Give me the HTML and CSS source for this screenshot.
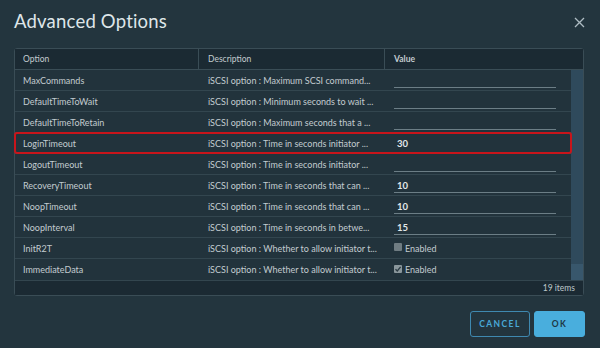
FILE: index.html
```html
<!DOCTYPE html>
<html>
<head>
<meta charset="utf-8">
<link rel="stylesheet" href="styles.css">
</head>
<body>
<div class="dialog">
  <div class="titlebar">
    <h1 class="title">Advanced Options</h1>
    <svg class="close" width="11" height="11" viewBox="0 0 11 11"><path d="M1 1L10 10M10 1L1 10" stroke="#aebcc3" stroke-width="1.3" fill="none"/></svg>
  </div>
  <div class="grid">
    <div class="head">
      <div class="hcell c1">Option</div>
      <div class="hcell c2">Description</div>
      <div class="hcell c3">Value</div>
    </div>
    <div class="body">
      <div class="rows">
        <div class="row"><div class="cell c1">MaxCommands</div><div class="cell c2">iSCSI option : Maximum SCSI command...</div><div class="cell c3"><span class="input"></span></div></div>
        <div class="row"><div class="cell c1">DefaultTimeToWait</div><div class="cell c2">iSCSI option : Minimum seconds to wait ...</div><div class="cell c3"><span class="input"></span></div></div>
        <div class="row"><div class="cell c1">DefaultTimeToRetain</div><div class="cell c2">iSCSI option : Maximum seconds that a ...</div><div class="cell c3"><span class="input"></span></div></div>
        <div class="row selected"><div class="cell c1">LoginTimeout</div><div class="cell c2">iSCSI option : Time in seconds initiator ...</div><div class="cell c3"><span class="input plain">30</span></div></div>
        <div class="row"><div class="cell c1">LogoutTimeout</div><div class="cell c2">iSCSI option : Time in seconds initiator ...</div><div class="cell c3"><span class="input"></span></div></div>
        <div class="row"><div class="cell c1">RecoveryTimeout</div><div class="cell c2">iSCSI option : Time in seconds that can ...</div><div class="cell c3"><span class="input">10</span></div></div>
        <div class="row"><div class="cell c1">NoopTimeout</div><div class="cell c2">iSCSI option : Time in seconds that can ...</div><div class="cell c3"><span class="input">10</span></div></div>
        <div class="row"><div class="cell c1">NoopInterval</div><div class="cell c2">iSCSI option : Time in seconds in betwe...</div><div class="cell c3"><span class="input">15</span></div></div>
        <div class="row"><div class="cell c1">InitR2T</div><div class="cell c2">iSCSI option : Whether to allow initiator t...</div><div class="cell c3"><span class="check"></span><span class="checklabel">Enabled</span></div></div>
        <div class="row last"><div class="cell c1">ImmediateData</div><div class="cell c2">iSCSI option : Whether to allow initiator t...</div><div class="cell c3"><span class="check on"><svg width="8" height="8" viewBox="0 0 8 8"><path d="M1.5 4.2L3.3 6L6.6 1.8" stroke="#2a3a42" stroke-width="1.3" fill="none"/></svg></span><span class="checklabel">Enabled</span></div></div>
      </div>
      <div class="scrollbar"><div class="thumb"></div></div>
    </div>
    <div class="foot">19 items</div>
  </div>
  <div class="actions">
    <button class="btn outline">CANCEL</button>
    <button class="btn primary">OK</button>
  </div>
</div>
</body>
</html>
```
FILE: styles.css
```css
* { box-sizing: border-box; }
html, body { margin: 0; padding: 0; background: #23353e; }
body { width: 600px; height: 348px; overflow: hidden; font-family: "Lato", "Open Sans", sans-serif; }
.dialog { width: 600px; height: 348px; background: #23353e; padding: 0 15px 0 14px; }
.titlebar { height: 48px; display: flex; justify-content: space-between; align-items: flex-start; }
.title { margin: 10px 0 0 0; font-weight: 400; font-size: 18.5px; color: #dfe6e9; letter-spacing: 0.2px; }
.close { margin-top: 17px; margin-right: 0; }
.grid { width: 570px; border: 1px solid #3a4d56; border-radius: 3px; background: #22333c; }
.head { display: flex; height: 21px; background: #1b2a33; border-bottom: 1px solid #3a4d56; }
.hcell { font-size: 8.5px; color: #c3ccd0; display: flex; align-items: center; padding-left: 8px; }
.c1 { width: 184px; }
.c2 { width: 186px; padding-left: 9px; }
.c3 { flex: 1; padding-left: 9px; }
.hcell.c1, .hcell.c2 { border-right: 1px solid #3a4d56; }
.hcell.c3 { font-weight: 700; }
.body { display: flex; height: 210px; }
.rows { flex: 1; }
.row { display: flex; height: 21px; border-bottom: 1px solid #33464f; position: relative; }
.row.last { border-bottom: none; }
.row.selected::after { content: ""; position: absolute; left: -1px; top: -1px; right: -1px; bottom: -1px; border: 2px solid #c8151b; border-radius: 3px; }
.cell { font-size: 9px; color: #c3ccd0; display: flex; align-items: center; padding-left: 8px; white-space: nowrap; overflow: hidden; }
.cell.c2, .cell.c3 { padding-left: 9px; }
.input { display: flex; align-items: center; width: 162px; height: 15px; margin-top: 1px; border-bottom: 1px solid #6c7e86; padding-left: 3px; font-size: 9.5px; color: #e3e8ea; font-weight: 700; }
.input.plain { border-bottom: none; }
.check { width: 8px; height: 8px; border-radius: 1px; background: #6f7c82; margin-top: -2px; display: flex; align-items: center; justify-content: center; }
.check.on { background: #8a979c; }
.check svg { display: block; }
.checklabel { margin-left: 3px; color: #c3ccd0; }
.scrollbar { width: 12px; background: #2f4a5c; display: flex; flex-direction: column; justify-content: flex-end; }
.thumb { height: 16px; background: #38576c; }
.foot { height: 15px; background: #1b2a33; border-top: 1px solid #33464f; font-size: 8.5px; color: #bfc8cc; text-align: right; padding-right: 8px; line-height: 14px; }
.actions { display: flex; justify-content: flex-end; gap: 4px; margin-top: 15px; }
.btn { height: 26px; font-family: "Lato", sans-serif; font-weight: 700; font-size: 8.5px; letter-spacing: 1.4px; border-radius: 3px; cursor: pointer; }
.btn.outline { width: 60px; background: transparent; border: 1px solid #3f89b0; color: #49a9d8; }
.btn.primary { width: 51px; background: #49aedd; border: 1px solid #49aedd; color: #1e3744; }
```
